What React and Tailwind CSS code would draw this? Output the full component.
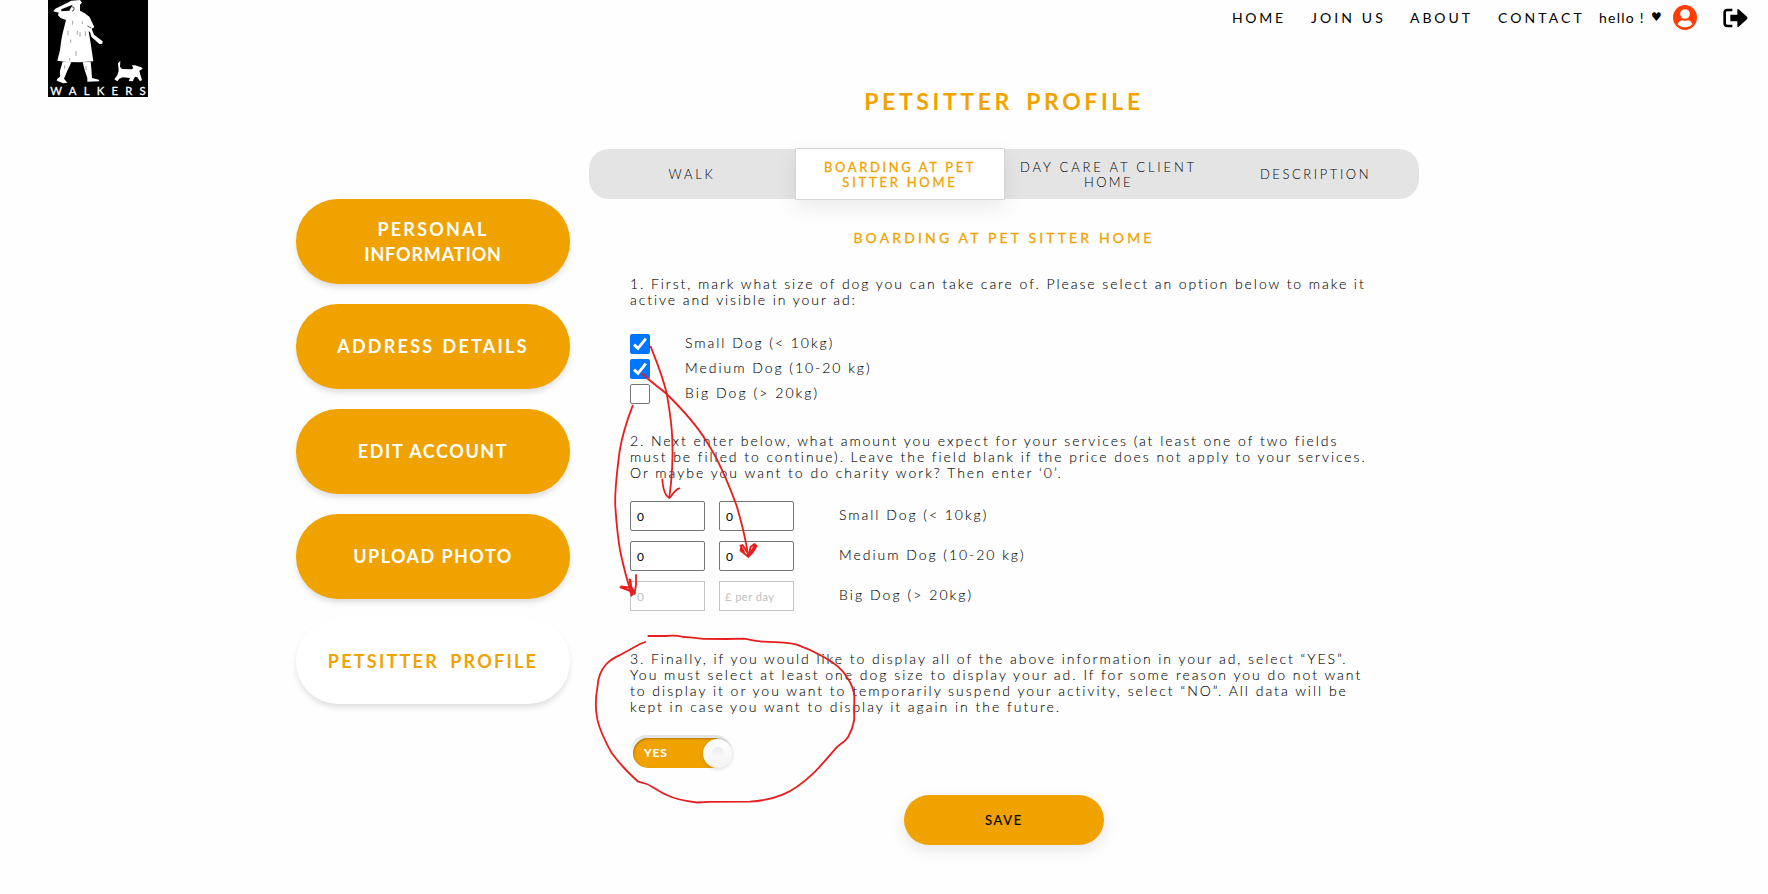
import React from "react";

function Logo() {
  return (
    <svg viewBox="54 0 300 291" className="ml-[48px] h-[97px] w-[100px] shrink-0 bg-black">
      <g fill="#fff">
        <path d="M125 2 L150 0 L156 8 L150 14 L150 32 Q166 38 178 50 L184 62 L193 82 L185 86 L192 104 L218 124 L217 131 L208 132 L184 110 L180 96 L176 94 L182 130 L190 184 L148 187 L110 186 L82 182 L90 150 L94 120 L98 100 L108 60 L92 54 L84 46 L86 38 L70 34 L76 26 L124 2 Z" />
        <path d="M98 185 L124 187 L112 212 L102 236 L112 248 L100 250 L80 242 L82 236 L90 230 L90 212 Z" />
        <path d="M158 187 L182 185 L184 205 L186 234 L207 239 L208 244 L172 245 L172 234 L164 210 Z" />
        <path d="M264 190 L271 183 L270 200 L276 207 L304 208 L310 205 L306 196 L315 196 L334 202 L338 206 L328 212 L331 224 L336 240 L330 244 L322 232 L315 230 L308 244 L296 243 L300 234 L278 232 L268 236 L262 244 L253 238 L262 226 L266 212 Z" />
      </g>
      <path d="M94 28 L128 14 L118 32 L94 34 Z" fill="#000" />
      <path d="M124 20 L132 22 L132 30 L126 34 M172 78 L184 84" fill="none" stroke="#000" strokeWidth="2" />
      <path
        d="M128 62v12M142 92v12M157 64v8M114 92v14M166 94v14M122 118v10M150 96v14M138 154v14M118 174v8M104 196v10M168 198v12"
        stroke="#000"
        strokeWidth="1.1"
        fill="none"
      />
      <text x="61" y="285" fill="#fff" fontSize="34" fontWeight="400" fontFamily="Lato, sans-serif" textLength="286" stroke="#fff" strokeWidth="0.8">
        WALKERS
      </text>
    </svg>
  );
}

function UserIcon() {
  return (
    <svg viewBox="0 0 72 75" className="h-[25px] w-[24px] shrink-0">
      <ellipse cx="36" cy="37.5" rx="36" ry="37.5" fill="#ff3d00" />
      <circle cx="36" cy="27" r="14.5" fill="#fff" />
      <path d="M14 58 Q18 46 29 46 Q36 49 43 46 Q54 46 58 58 Q50 67 36 67 Q22 67 14 58Z" fill="#fff" />
    </svg>
  );
}

function ExitIcon() {
  return (
    <svg viewBox="0 0 75 60" className="h-[20px] w-[25px]">
      <path d="M28 6 H13 Q5 6 5 14 V46 Q5 54 13 54 H28" fill="none" stroke="#000" strokeWidth="8" />
      <path d="M22 20 H43 V5 Q43 1 47 4 L72 26 Q75 30 72 34 L47 56 Q43 58 43 54 V40 H22 Z" fill="#000" />
    </svg>
  );
}

const steps = [
  [["PERSONAL", "tracking-[2.25px]"], ["INFORMATION", "tracking-[0.85px]"]],
  [["ADDRESS DETAILS", "tracking-[2.24px] [word-spacing:1.5px]"]],
  [["EDIT ACCOUNT", "tracking-[1.58px]"]],
  [["UPLOAD PHOTO", "tracking-[1.44px]"]],
  [["PETSITTER PROFILE", "tracking-[2.25px] [word-spacing:4.5px]"]],
];

const tabs = [
  [["WALK", "tracking-[2.74px]"]],
  [["BOARDING AT PET", "tracking-[2.62px]"], ["SITTER HOME", "tracking-[2.76px]"]],
  [["DAY CARE AT CLIENT", "tracking-[2.83px]"], ["HOME", "tracking-[2.42px]"]],
  [["DESCRIPTION", "tracking-[2.57px]"]],
];

const intro = [
  ["1. First, mark what size of dog you can take care of. Please select an option below to make it", "tracking-[1.935px]"],
  ["active and visible in your ad:", "tracking-[1.93px]"],
];

const pricing = [
  ["2. Next enter below, what amount you expect for your services (at least one of two fields", "tracking-[1.955px]"],
  ["must be filled to continue). Leave the field blank if the price does not apply to your services.", "tracking-[1.936px]"],
  ["Or maybe you want to do charity work? Then enter ‘0’.", "tracking-[1.99px]"],
];

const publish = [
  ["3. Finally, if you would like to display all of the above information in your ad, select “YES”.", "tracking-[1.945px]"],
  ["You must select at least one dog size to display your ad. If for some reason you do not want", "tracking-[1.99px]"],
  ["to display it or you want to temporarily suspend your activity, select “NO”. All data will be", "tracking-[1.986px]"],
  ["kept in case you want to display it again in the future.", "tracking-[1.975px]"],
];

const dogs = [
  { label: "Small Dog (< 10kg)", spacing: "tracking-[1.97px]", on: true },
  { label: "Medium Dog (10-20 kg)", spacing: "tracking-[1.97px]", on: true },
  { label: "Big Dog (> 20kg)", spacing: "tracking-[2.06px]", on: false },
];

function Lines({ lines, className }) {
  return (
    <div className={className}>
      {lines.map(([text, spacing]) => (
        <div key={text} className={`whitespace-nowrap ${spacing}`}>{text}</div>
      ))}
    </div>
  );
}

function Checkbox({ on }) {
  return on ? (
    <span className="flex h-5 w-5 items-center justify-center rounded-[2px] bg-[#0075ff]">
      <svg viewBox="0 0 20 20" className="h-5 w-5">
        <path d="M4 10.6 L8 14.4 L15.8 4.6" fill="none" stroke="#fff" strokeWidth="2.9" />
      </svg>
    </span>
  ) : (
    <span className="h-5 w-5 rounded-[2px] border border-[#767676] bg-white" />
  );
}

function Field({ on, text }) {
  return (
    <div
      className={`h-[30px] w-[75px] border bg-white leading-[29px] [-webkit-text-stroke:0px] ${
        on ? "rounded-[2px] border-[#767676] text-black" : "border-[#c4c4c4] text-[#c0c0c0]"
      } ${text === "0" ? "pl-[6px] text-[12px]" : "pl-[5px] text-[11px] tracking-[0.5px]"}`}
    >
      {text}
    </div>
  );
}

function Marks() {
  return (
    <svg viewBox="0 0 1768 894" className="pointer-events-none absolute left-0 top-0 h-[894px] w-[1768px]">
      <g fill="none" stroke="#e81e1e" strokeWidth="1.8" strokeLinecap="round" strokeLinejoin="round">
        <path d="M650.7 346.7 C656 360 662 374 666.7 393.3 C670 412 672 424 672.3 440 C673 456 672.5 474 669.3 498" />
        <path d="M662.3 479.3 C663 489 665 496 669.3 497.5 C672 497.5 673 490 679.3 488.3" />
        <path d="M642.7 374 C652 383 660 388 666.7 394 C684 411 696 424 706.7 441.7 C720 462 728 482 736.7 506 C742 524 746 540 748.3 556.7" />
        <path d="M748.3 556.7 L740.5 550.5 L741 548 L744 552 L740.5 545.5 L742.5 545 L747 552 M748.5 556.5 L750.5 547 L754.5 544 L756.5 546 L753 552 L748.5 556.5 L755 545" />
        <path d="M632.7 405.7 C626 423 622 436 619.5 452 C616.5 475 614.5 490 615.3 506 C616.5 525 618 538 620 550 C624 570 628 582 631.5 595.5" />
        <path d="M631.5 595.5 L634 592.5 L620.5 587.5 L621.5 586.5 L632 588 L635 593 L624 588 M629.5 579.5 L632 594 L630.5 580 M636 575 C636.5 582 636 588 634.5 594 L630 591" />
        <path d="M648.3 636 L665 636 Q676 635 683 637 L690 637.3 L703.3 638.9 L727 639 L743.3 638.7 C752 640 758 641.5 763.3 641.7 C777 642 789 642.5 796.7 644.7 C806 648 815 652 823.3 656.7 C835 663 842 669 846.7 676.7 C851 683 854 690 854.3 696.7 L854.2 720 C853 727 851 732 848.3 736.7 C845 742 840 744 836.7 747.3 C828 757 821 766 813.3 773.3 C804 782 794 790 783.3 794.3 C772 799 763 801 750 801.7 L709 801.8 L697 802.5 C684 801 675 799 666.7 795 C659 792 652 786 646.7 784 L638.3 781.7 C629 774 620 764 611.7 753 C605 741 598 728 596.7 715 C595 705 596 695 597.5 686.7 C598 678 600 671 606 664.5 C611 659 616 657 621 654.5 L640 644 L645.3 642" />
      </g>
    </svg>
  );
}

export default function App() {
  return (
    <div className="relative h-[894px] w-[1768px] overflow-hidden bg-[#fefefe] font-['Lato','Open_Sans',sans-serif] text-black">
      <header className="flex h-9 items-start">
        <Logo />
        <nav className="ml-[1084px] flex h-[35px] shrink-0 items-center whitespace-nowrap text-[14px]">
          <div className="flex pb-px">
            <span className="w-[79px] tracking-[2.67px]">HOME</span>
            <span className="w-[99px] tracking-[3.1px]">JOIN US</span>
            <span className="w-[88px] tracking-[2.9px]">ABOUT</span>
            <span className="w-[101px] tracking-[3.1px]">CONTACT</span>
            <span className="w-[52px] tracking-[1.24px]">hello !</span>
          </div>
          <span className="w-[22px] pb-[2px] font-['DejaVu_Sans'] text-[12px]">♥</span>
          <UserIcon />
          <span className="ml-[26px]"><ExitIcon /></span>
        </nav>
      </header>

      <main className="ml-[296px] flex gap-[19px]">
        <aside className="mt-[163px] flex w-[274px] shrink-0 flex-col gap-5">
          {steps.map((lines, i) => (
            <button
              key={i}
              className={`flex h-[85px] w-full flex-col items-center justify-center rounded-[42px] text-[18px] font-bold leading-[25px] shadow-[0_4px_6px_-1px_rgba(0,0,0,0.14)] ${
                i === 4 ? "bg-white text-[#f0a300]" : "bg-[#f0a300] text-white"
              }`}
            >
              <Lines lines={lines} />
            </button>
          ))}
        </aside>

        <section className="w-[830px] pt-[50px]">
          <h1 className="text-center text-[23px] font-bold leading-[30px] tracking-[3.6px] text-[#f0a300] [word-spacing:4px]">PETSITTER PROFILE</h1>

          <div className="mt-[33px] grid h-[50px] grid-cols-[206px_210px_207px_207px] content-center items-center rounded-[20px] bg-[#e4e4e4] text-center text-[13px] leading-[15px]">
            {tabs.map((lines, i) => (
              <div
                key={i}
                className={
                  i === 1
                    ? "flex h-[52px] items-center justify-center border border-[#d6d6d6] bg-white pt-px font-normal text-[#f0a300] shadow-[0_8px_22px_rgba(0,0,0,0.08)] [-webkit-text-stroke:0.3px]"
                    : "flex h-[50px] items-center justify-center pt-px font-light"
                }
              >
                <Lines lines={lines} />
              </div>
            ))}
          </div>

          <h2 className="mt-[29px] text-center text-[14px] font-normal leading-5 tracking-[3.15px] text-[#f0a300] [-webkit-text-stroke:0.3px]">
            BOARDING AT PET SITTER HOME
          </h2>

          <div className="ml-[41px] text-[14px] font-light leading-4 [-webkit-text-stroke:0.08px]">
            <Lines lines={intro} className="mt-7" />

            <div className="mt-[26px] flex flex-col gap-[5px]">
              {dogs.map((d) => (
                <div key={d.label} className="flex h-5 items-start gap-[35px]">
                  <Checkbox on={d.on} />
                  <span className={`whitespace-nowrap leading-[18px] ${d.spacing}`}>{d.label}</span>
                </div>
              ))}
            </div>

            <Lines lines={pricing} className="mt-[29px]" />

            <div className="mt-5 flex flex-col gap-2.5">
              {dogs.map((d) => (
                <div key={d.label} className="flex h-[30px] items-start">
                  <div className="flex gap-3.5 font-normal">
                    <Field on={d.on} text="0" />
                    <Field on={d.on} text={d.on ? "0" : "£ per day"} />
                  </div>
                  <span className={`ml-[45px] whitespace-nowrap leading-[28px] ${d.spacing}`}>{d.label}</span>
                </div>
              ))}
            </div>

            <Lines lines={publish} className="mt-10" />

            <div className="mt-5 flex h-[33px] w-[102px] items-end justify-end rounded-[17px] bg-linear-to-b from-[#e2e2e2] to-white to-60%">
              <div className="flex h-[30px] w-[99px] items-center justify-between rounded-full bg-linear-to-r from-[#f0a300] from-85% to-transparent to-85% pl-[11px] shadow-[inset_1px_1px_2px_rgba(0,0,0,0.25)]">
                <span className="text-[12px] font-bold tracking-[0.8px] text-white">YES</span>
                <span className="flex h-[29px] w-[29px] items-center justify-center rounded-full bg-linear-to-b from-white to-[#f3f3f3] shadow-[0_1px_4px_rgba(0,0,0,0.16)]">
                  <span className="h-3 w-3 rounded-full bg-linear-to-b from-[#ececec] to-[#fafafa]" />
                </span>
              </div>
            </div>
          </div>

          <button className="mx-auto mt-[27px] flex h-[50px] w-[200px] items-center justify-center rounded-[25px] bg-[#f0a300] pt-[2px] text-[13px] font-normal tracking-[1.7px] shadow-[0_5px_15px_rgba(0,0,0,0.1)] [-webkit-text-stroke:0.15px]">
            SAVE
          </button>
        </section>
      </main>
      <Marks />
    </div>
  );
}
